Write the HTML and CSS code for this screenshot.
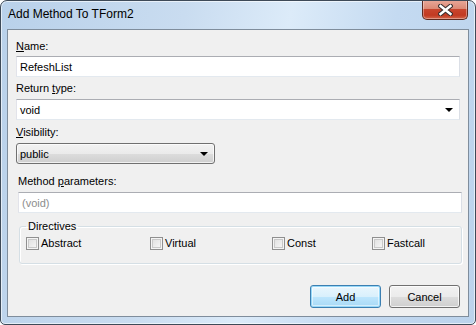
FILE: index.html
```html
<!DOCTYPE html>
<html lang="en">
<head>
  <meta charset="UTF-8" />
  <title>Add Method To TForm2</title>
  <link rel="stylesheet" href="styles.css">
</head>
<body>
  <div class="window">
    <div class="titlebar">
      <span class="title">Add Method To TForm2</span>
      <button type="button" class="close-btn" aria-label="Close">
        <svg width="15" height="12" viewBox="0 0 15 12">
          <path d="M2.5 2 L12.5 10 M12.5 2 L2.5 10" stroke="#3b3030" stroke-width="4.6" stroke-linecap="square"/>
          <path d="M2.5 2 L12.5 10 M12.5 2 L2.5 10" stroke="#fff" stroke-width="2.4" stroke-linecap="square"/>
        </svg>
      </button>
    </div>

    <div class="client">
      <div class="top-panel">
        <label class="field-label lbl-name"><u>N</u>ame:</label>
        <input type="text" class="edit" value="RefeshList" />

        <label class="field-label lbl-return">Return <u>t</u>ype:</label>
        <div class="combo">
          <span>void</span>
          <span class="arrow"></span>
        </div>

        <label class="field-label lbl-vis"><u>V</u>isibility:</label>
        <div class="droplist">
          <span>public</span>
          <span class="arrow"></span>
        </div>
      </div>

      <div class="bottom-panel">
        <label class="field-label lbl-params">Method <u>p</u>arameters:</label>
        <input type="text" class="edit" placeholder="(void)" />

        <fieldset class="directives">
          <legend>Directives</legend>
          <div class="check-row">
            <label class="check-item"><span class="check"></span>Abstract</label>
            <label class="check-item"><span class="check"></span>Virtual</label>
            <label class="check-item"><span class="check"></span>Const</label>
            <label class="check-item"><span class="check"></span>Fastcall</label>
          </div>
        </fieldset>
      </div>

      <div class="buttons">
        <button type="button" class="btn btn-default">Add</button>
        <button type="button" class="btn">Cancel</button>
      </div>
    </div>
  </div>
</body>
</html>
```

FILE: styles.css
```css
body {
  margin: 0;
  padding: 0;
  background: #fff;
  font-family: 'Liberation Sans', Arial, sans-serif;
  font-size: 11px;
  color: #000;
}
.window {
  width: 476px;
  height: 325px;
  box-sizing: border-box;
  border: 1px solid #3e4a58;
  border-radius: 7px 7px 5px 5px;
  background: linear-gradient(100deg, #b9d1ea 0%, #c9dcf0 35%, #dcebf9 55%, #c4daf1 75%, #bcd3ec 100%);
  box-shadow: inset 0 0 0 1px rgba(255,255,255,0.6);
  overflow: hidden;
}
.titlebar {
  height: 28px;
  display: flex;
  align-items: flex-start;
  justify-content: space-between;
}
.title {
  margin: 5px 0 0 7px;
  font-size: 12px;
  line-height: 17px;
  color: #000;
}
.close-btn {
  width: 46px;
  height: 20px;
  margin: -1px 7px 0 0;
  padding: 0;
  border: 1px solid #5d2a20;
  border-top: none;
  border-radius: 0 0 5px 5px;
  background: linear-gradient(#e9a99a 0%, #dc8a76 45%, #c8452d 50%, #c23a22 80%, #d2654a 100%);
  box-shadow: inset 0 0 0 1px rgba(255,255,255,0.35);
  display: flex;
  align-items: center;
  justify-content: center;
}
.close-btn svg {
  display: block;
}
.client {
  height: 288px;
  margin: 0 6px;
  box-sizing: border-box;
  border: 1px solid #7f8d9c;
  background: #f0f0f0;
}
.top-panel {
  padding: 8px 8px 0 8px;
}
.bottom-panel {
  padding: 0 6px 0 10px;
}
.field-label {
  display: block;
  height: 16px;
  line-height: 16px;
}
.lbl-name {
  margin-bottom: 2px;
}
.lbl-return {
  margin: 3px 0 3px 0;
}
.lbl-vis {
  margin: 4px 0 3px 0;
}
.lbl-params {
  margin: 9px 0 3px 0;
}
.edit {
  display: block;
  box-sizing: border-box;
  width: 444px;
  height: 21px;
  margin: 0;
  padding: 0 3px;
  font-family: inherit;
  font-size: 11px;
  color: #000;
  background: #fff;
  border: 1px solid;
  border-color: #abadb3 #dbdfe6 #e3e9ef #e2e3ea;
  outline: none;
}
.edit::placeholder {
  color: #8d8d8d;
}
.combo {
  box-sizing: border-box;
  width: 444px;
  height: 21px;
  padding: 0 4px 0 3px;
  display: flex;
  align-items: center;
  justify-content: space-between;
  background: #fff;
  border: 1px solid;
  border-color: #abadb3 #dbdfe6 #e3e9ef #e2e3ea;
}
.arrow {
  width: 0;
  height: 0;
  margin-right: 2px;
  border-left: 4px solid transparent;
  border-right: 4px solid transparent;
  border-top: 4px solid #000;
}
.droplist {
  box-sizing: border-box;
  width: 199px;
  height: 21px;
  padding: 0 4px 0 3px;
  display: flex;
  align-items: center;
  justify-content: space-between;
  border: 1px solid #707070;
  border-radius: 3px;
  background: linear-gradient(#f2f2f2 0%, #ebebeb 50%, #dddddd 51%, #cfcfcf 100%);
  box-shadow: inset 0 0 0 1px rgba(255,255,255,0.7);
}
.directives {
  width: 443px;
  box-sizing: border-box;
  margin: 5px 0 0 1px;
  padding: 1px 6px 12px 6px;
  border: 1px solid #d5dfe5;
  border-radius: 3px;
  box-shadow: inset 1px 1px 0 #fff, 1px 1px 0 #fff;
}
.directives legend {
  padding: 0 2px;
  margin: 0;
  line-height: 16px;
}
.check-row {
  display: grid;
  grid-template-columns: 124px 122px 100px auto;
  height: 16px;
}
.check-item {
  display: flex;
  align-items: center;
  line-height: 16px;
}
.check {
  box-sizing: border-box;
  width: 13px;
  height: 13px;
  margin-right: 2px;
  border: 1px solid #8f8f8f;
  background: linear-gradient(135deg, #dcdcdc 0%, #eeeeee 60%, #fbfbfb 100%);
  box-shadow: inset 0 0 0 1px #f4f4f4, inset 0 0 0 2px #c9c9c9;
}
.buttons {
  display: flex;
  justify-content: flex-end;
  gap: 8px;
  margin: 21px 8px 0 0;
}
.btn {
  width: 71px;
  height: 23px;
  padding: 0;
  font-family: inherit;
  font-size: 11px;
  color: #000;
  border: 1px solid #707070;
  border-radius: 3px;
  background: linear-gradient(#f2f2f2 0%, #ebebeb 50%, #dddddd 51%, #cfcfcf 100%);
  box-shadow: inset 0 0 0 1px rgba(255,255,255,0.75);
}
.btn-default {
  border-color: #3c7fb1;
  background: linear-gradient(#eaf6fd 0%, #d9f0fc 50%, #bee6fd 51%, #a7d9f5 100%);
  box-shadow: inset 0 0 0 1px #97d8f8, inset 0 0 0 2px rgba(255,255,255,0.5);
}
```
